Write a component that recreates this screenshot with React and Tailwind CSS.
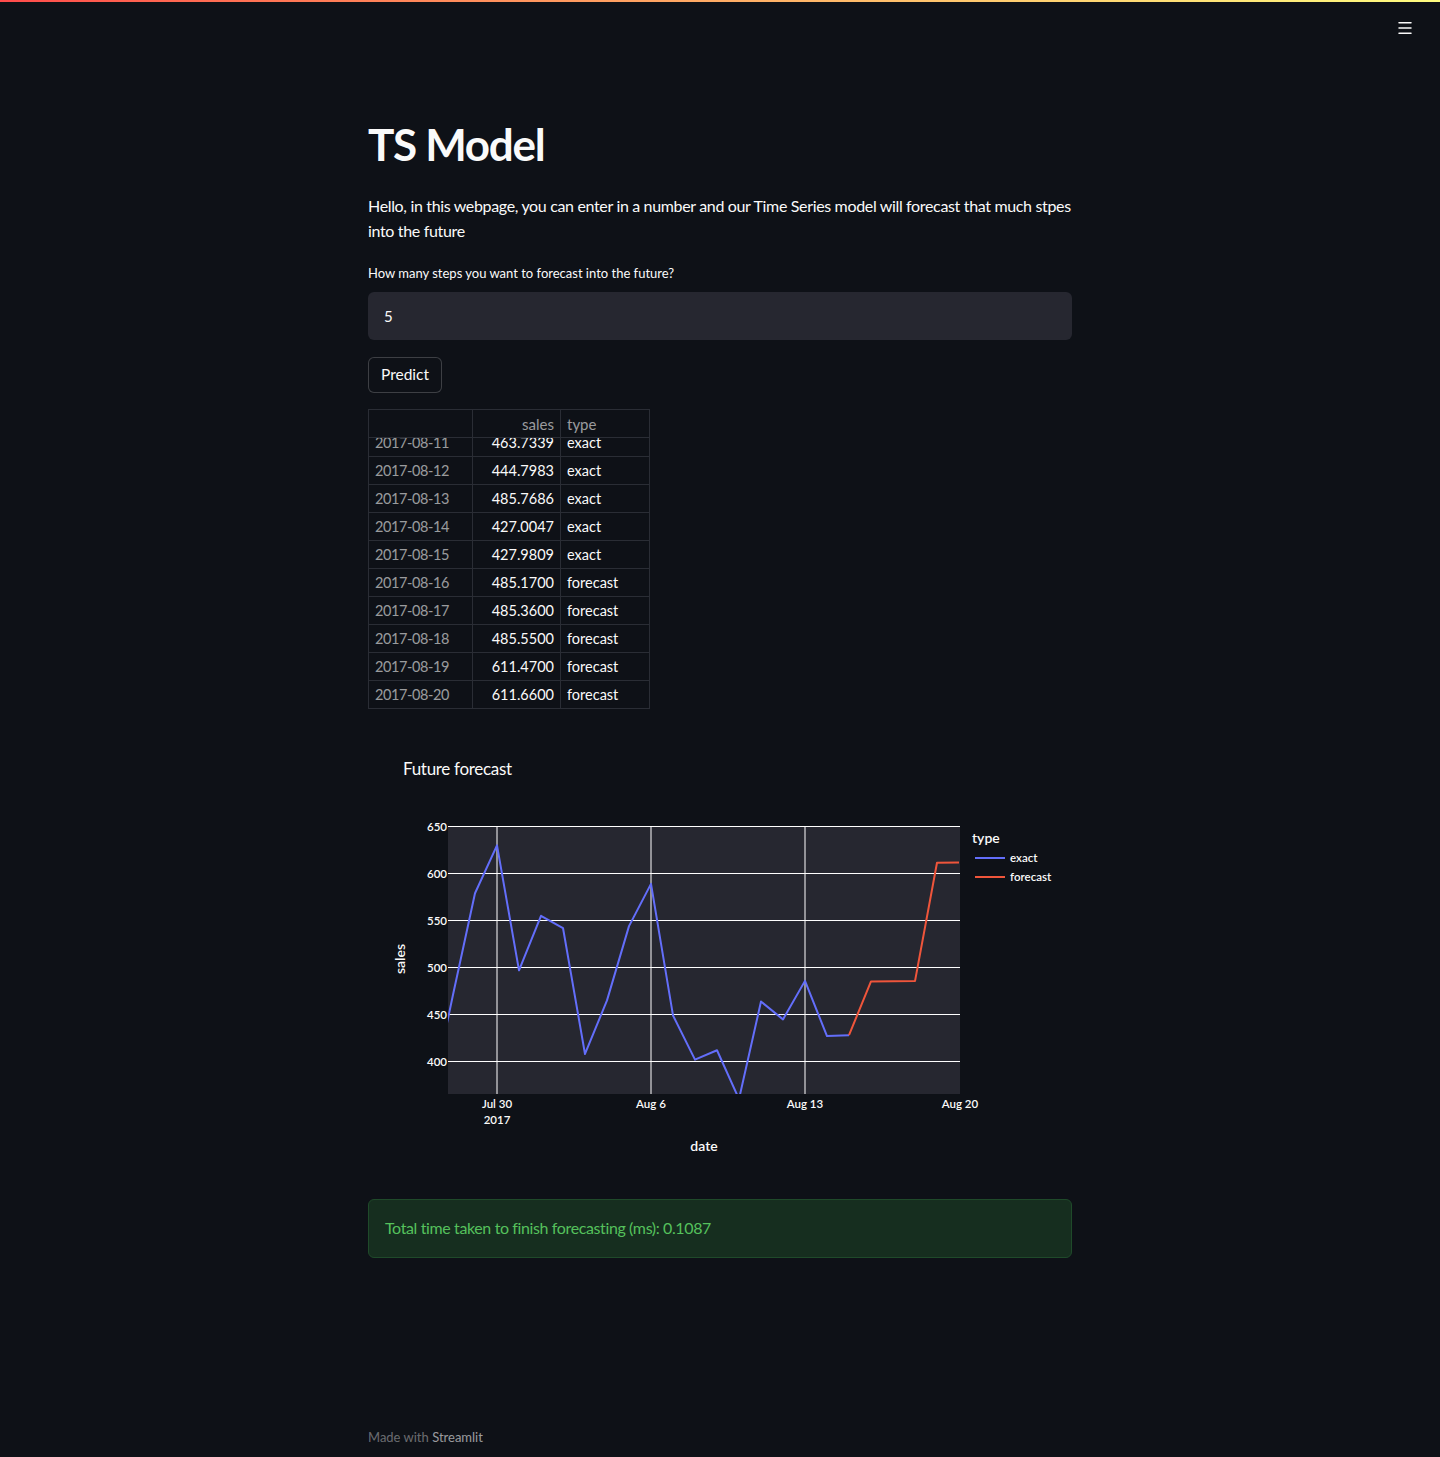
import { Menu } from 'lucide-react';

const FONT = { fontFamily: 'Lato, "Noto Sans", sans-serif' };

const ROWS = [
  ['2017-08-11', '463.7339', 'exact'],
  ['2017-08-12', '444.7983', 'exact'],
  ['2017-08-13', '485.7686', 'exact'],
  ['2017-08-14', '427.0047', 'exact'],
  ['2017-08-15', '427.9809', 'exact'],
  ['2017-08-16', '485.1700', 'forecast'],
  ['2017-08-17', '485.3600', 'forecast'],
  ['2017-08-18', '485.5500', 'forecast'],
  ['2017-08-19', '611.4700', 'forecast'],
  ['2017-08-20', '611.6600', 'forecast'],
];

// day 0 = Jul 27
const EXACT = [360, 471, 579, 630, 497, 555, 542, 408, 465, 544, 589, 449, 402, 412, 360, 463.73, 444.8, 485.77, 427.0, 427.98];
const FORECAST = [[19, 427.98], [20, 485.17], [21, 485.36], [22, 485.55], [23, 611.47], [24, 611.66]];

const px = (d) => 63 + 22 * d;
const py = (v) => 93.5 + (650 - v) * 0.94;

function ForecastChart() {
  const exactPts = EXACT.map((v, d) => `${px(d)},${py(v)}`).join(' ');
  const fcPts = FORECAST.map(([d, v]) => `${px(d)},${py(v)}`).join(' ');
  const yTicks = [650, 600, 550, 500, 450, 400];
  const xTicks = [
    [129, 'Jul 30'],
    [283, 'Aug 6'],
    [437, 'Aug 13'],
    [592, 'Aug 20'],
  ];

  return (
    <svg width="704" height="450" className="block" style={FONT}>
      <defs>
        <clipPath id="plotArea">
          <rect x="80" y="93" width="512" height="268" />
        </clipPath>
      </defs>
      <text x="35" y="42" fill="#fafafa" fontSize="17" letterSpacing="-0.3">Future forecast</text>

      <rect x="80" y="93" width="512" height="268" fill="#262730" />
      {yTicks.map((t) => (
        <g key={t}>
          <line x1="80" x2="592" y1={py(t)} y2={py(t)} stroke="#ffffff" strokeWidth="1" />
          <text x="79" y={py(t) + 4} fill="#fafafa" fontSize="11.5" fontWeight="600" textAnchor="end">{t}</text>
        </g>
      ))}
      {xTicks.map(([x, label]) => (
        <g key={label}>
          {x < 592 && <line x1={x} x2={x} y1="93" y2="361" stroke="#ffffff" strokeWidth="1" />}
          <text x={x} y="375" fill="#fafafa" fontSize="11.5" fontWeight="600" textAnchor="middle">{label}</text>
        </g>
      ))}
      <text x="129" y="391" fill="#fafafa" fontSize="11.5" fontWeight="600" textAnchor="middle">2017</text>

      <g clipPath="url(#plotArea)">
        <polyline points={exactPts} fill="none" stroke="#636efa" strokeWidth="2" strokeLinejoin="round" />
        <polyline points={fcPts} fill="none" stroke="#ef553b" strokeWidth="2" strokeLinejoin="round" />
      </g>

      <text x="336" y="418" fill="#fafafa" fontSize="14" fontWeight="600" textAnchor="middle">date</text>
      <text x="0" y="0" fill="#fafafa" fontSize="14" fontWeight="600" textAnchor="middle" transform="translate(37 226) rotate(-90)">sales</text>

      <text x="604" y="110" fill="#fafafa" fontSize="14" fontWeight="600">type</text>
      <line x1="607" x2="637" y1="125" y2="125" stroke="#636efa" strokeWidth="2" />
      <text x="642" y="129" fill="#fafafa" fontSize="11.5" fontWeight="600">exact</text>
      <line x1="607" x2="637" y1="144" y2="144" stroke="#ef553b" strokeWidth="2" />
      <text x="642" y="148" fill="#fafafa" fontSize="11.5" fontWeight="600">forecast</text>
    </svg>
  );
}

function DataTable() {
  const cell = 'h-[28px] flex items-center pt-[2px] px-[6px] border-b border-[#2a2d35] text-[14.5px]';
  return (
    <div className="w-[282px] h-[300px] border border-[#2a2d35] overflow-hidden">
      <div className="grid grid-cols-[104px_88px_90px] relative z-10 bg-[#0e1117]">
        <div className={`${cell} border-r`} />
        <div className={`${cell} border-r justify-end text-[15px] text-[#fafafa]/60`}>sales</div>
        <div className={`${cell} text-[15px] text-[#fafafa]/60`}>type</div>
      </div>
      <div className="-mt-[9px]">
        {ROWS.map(([date, sales, type]) => (
          <div key={date} className="grid grid-cols-[104px_88px_90px]">
            <div className={`${cell} border-r tracking-[-0.4px] text-[#fafafa]/60`}>{date}</div>
            <div className={`${cell} border-r justify-end text-[#fafafa]`}>{sales}</div>
            <div className={`${cell} text-[#fafafa]`}>{type}</div>
          </div>
        ))}
      </div>
    </div>
  );
}

export default function App() {
  return (
    <div className="min-h-[1457px] bg-[#0e1117] text-[#fafafa] relative" style={FONT}>
      <div className="h-[2px] bg-gradient-to-r from-[#ff4b4b] to-[#fffd80]" />
      <button className="absolute top-[19px] right-[26px] text-[#fafafa]">
        <Menu className="w-[18px] h-[18px]" strokeWidth={2} />
      </button>

      <main className="w-[704px] mx-auto pt-[116px] pb-[12px]">
        <h1 className="text-[44px] font-bold leading-[1.2] tracking-[-1.3px]">TS Model</h1>
        <p className="mt-[22px] text-[16px] leading-[25px] whitespace-nowrap tracking-[-0.34px]">
          Hello, in this webpage, you can enter in a number and our Time Series model will forecast that much stpes
          <br />
          into the future
        </p>

        <label className="block mt-[22px] text-[13px] leading-[16px]">How many steps you want to forecast into the future?</label>
        <div className="mt-[11px] h-[48px] rounded-[6px] bg-[#262730] flex items-center px-[16px] text-[15px]">5</div>

        <button className="mt-[17px] h-[36px] px-[12px] rounded-[6px] border border-[#fafafa]/20 bg-[#0e1117] text-[15.5px]">
          Predict
        </button>

        <div className="mt-[16px]">
          <DataTable />
        </div>

        <div className="mt-[24px]">
          <ForecastChart />
        </div>

        <div className="mt-[16px] h-[59px] rounded-[6px] border border-[#1f4a2a] bg-[#162e1f] flex items-center px-[16px] text-[16px] tracking-[-0.38px] text-[#55c15c]">
          Total time taken to finish forecasting (ms): 0.1087
        </div>

        <div className="mt-[170px] text-[13px] text-[#fafafa]/40">
          Made with <span className="text-[#fafafa]/60">Streamlit</span>
        </div>
      </main>
    </div>
  );
}
